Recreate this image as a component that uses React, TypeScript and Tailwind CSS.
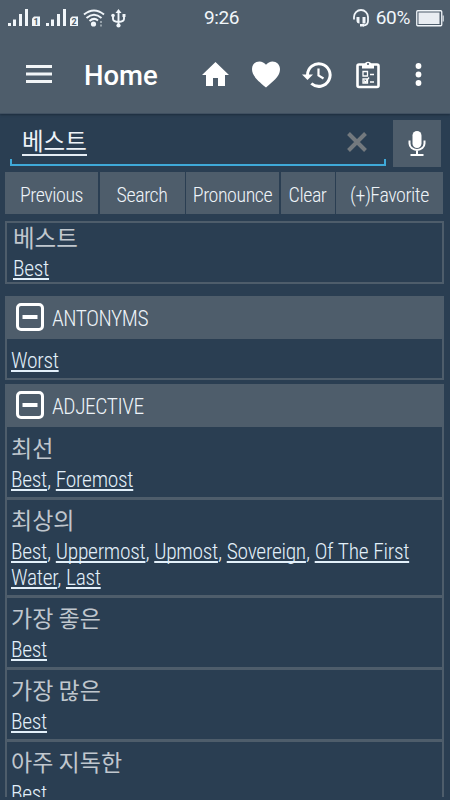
import type { ReactNode } from "react";

interface Meaning {
    word: string;
    results: string[];
}

const actions = [
    { label: "Previous", width: "w-[93px]" },
    { label: "Search", width: "w-[85px]" },
    { label: "Pronounce", width: "w-[93px]" },
    { label: "Clear", width: "w-[54px]" },
    { label: "(+)Favorite", width: "w-[107px]" },
];

const adjectives: Meaning[] = [
    { word: "최선", results: ["Best", "Foremost"] },
    { word: "최상의", results: ["Best", "Uppermost", "Upmost", "Sovereign", "Of The First Water", "Last"] },
    { word: "가장 좋은", results: ["Best"] },
    { word: "가장 많은", results: ["Best"] },
    { word: "아주 지독한", results: ["Best"] },
];

const Signal = ({ sim }: { sim: string }) => (
    <svg className="h-[18px] w-[33px]" viewBox="0 0 33 18" fill="#f1f6fa">
        <path d="M0 14h3v3H0zM5 10.500h3V17H5zM11 5h3v12h-3zM17 0h3v17h-3z" />
        <path d="M24 9.500l2-2h6V17h-8z" />
        <text x="28" y="15.500" fontSize="9" fontWeight="700" textAnchor="middle" fill="#4e5d6b" fontFamily="Roboto">{sim}</text>
    </svg>
);

const StatusBar = () => (
    <div className="flex h-9 items-center pl-2 pr-[6px] text-[#f1f6fa]">
        <div className="flex w-[196px] items-center">
            <Signal sim="1" />
            <div className="w-[5px]" />
            <Signal sim="2" />
            <svg className="ml-1 h-[18px] w-[22px]" viewBox="0 0 22 18" fill="none" stroke="#f1f6fa" strokeWidth="2">
                <path d="M1 5.500Q11-2.500 21 5.500M3.500 9Q11 2.500 18.500 9M6.500 12Q11 8 15 11.500" />
                <circle cx="10.500" cy="15" r="2.600" fill="#f1f6fa" stroke="none" />
                <path d="M18 12v2M18 15.500v2" strokeWidth="1.500" opacity=".6" />
            </svg>
            <svg className="ml-[6px] h-[19px] w-[15px]" viewBox="0 0 15 19" fill="none" stroke="#f1f6fa" strokeWidth="1.900">
                <path d="M7.500 2v15M2 6v4q0 2.500 5.500 3M13 6v4q0 2.500-5.500 3" />
                <path d="M7.500 0l3 4h-6zM11.500 5h3v3h-3z" fill="#f1f6fa" stroke="none" />
                <circle cx="2" cy="6.500" r="1.800" fill="#f1f6fa" stroke="none" />
                <circle cx="7.500" cy="16.500" r="2.100" fill="#f1f6fa" stroke="none" />
            </svg>
        </div>
        <span className="text-[19px] tracking-[-0.4px]">9:26</span>
        <div className="ml-auto flex items-center">
            <svg className="mr-px h-[18px] w-[16px]" viewBox="0 0 16 18" fill="none" stroke="#f1f6fa" strokeWidth="1.800">
                <path d="M1 10.500V8a7 7 0 0 1 14 0v4q0 4.500-5 4.500" />
                <path d="M3.500 8h3v6.500q-3 0-3-3zM9.500 8h3v6.500h-3zM7 15h4v2.500H7z" fill="#f1f6fa" stroke="none" />
            </svg>
            <span className="ml-[6px] text-[19px] tracking-[-0.3px]">60%</span>
            <svg className="ml-[6px] h-[17px] w-[28px]" viewBox="0 0 28 17" fill="none">
                <rect x=".75" y=".75" width="25" height="15" rx="1" stroke="#f1f6fa" strokeWidth="1.300" />
                <path d="M2.500 2.500h21v11.500h-21z" fill="#e9edf2" />
                <path d="M27.200 5.500v6" stroke="#f1f6fa" />
            </svg>
        </div>
    </div>
);

const AppBar = () => (
    <div className="flex h-[77px] items-center pl-[26px]">
        <svg className="h-5 w-[26px]" viewBox="0 0 26 20">
            <path d="M0 0h26v3H0zM0 7.500h26v3H0zM0 15h26v3H0z" fill="#f2f5f7" />
        </svg>
        <h1 className="ml-8 w-[86px] pt-[2px] text-[27.500px] font-medium text-white">Home</h1>
        <svg className="ml-[31px] h-[26px] w-[29px]" viewBox="0 0 29 26" fill="#fff">
            <path d="M14.500 0L28 13h-4v11h-7v-8h-5v8H5V13H1z" />
        </svg>
        <svg className="ml-[21px] h-[27px] w-[30px]" viewBox="0 0 30 27" fill="#fff">
            <path d="M15 26.500C4 17.500 1 13.500 1 8C1 3.500 4.500 .5 8.500 .5C11 .5 13.500 1.800 15 3.800C16.500 1.800 19 .5 21.500 .5C25.500 .5 29 3.500 29 8C29 13.500 26 17.500 15 26.500z" />
        </svg>
        <svg className="ml-[21px] h-[28px] w-[30px]" viewBox="0 0 30 28" fill="none" stroke="#fff" strokeWidth="3">
            <path d="M5.500 14a11.300 11.300 0 1 1 3.800 8.500" />
            <path d="M0 13.500h11l-5.500 5.500z" fill="#fff" stroke="none" />
            <path d="M16.500 7.500v7l5 3" strokeWidth="2.200" />
        </svg>
        <svg className="ml-[24px] h-[29px] w-[24px]" viewBox="0 0 24 29" fill="none" stroke="#fff">
            <rect x="1.500" y="4.500" width="21" height="22.500" rx="1.500" strokeWidth="2.600" />
            <path d="M6 8.500V4.500h2.500a3.600 3.600 0 0 1 7 0H18v4z" fill="#fff" stroke="none" />
            <circle cx="12" cy="4" r="1.100" fill="#4e5d6b" stroke="none" />
            <path d="M7 11.500h4.500V16H7zM7 19h4.500v4H7zM14 14.500h4M14 22h4M8 20.500l1.500 1.700L13 17.500" strokeWidth="1.300" />
        </svg>
        <svg className="ml-[35px] h-6 w-[7px]" viewBox="0 0 7 24" fill="#fff">
            <circle cx="3.500" cy="3" r="2.900" />
            <circle cx="3.500" cy="11.500" r="2.900" />
            <circle cx="3.500" cy="20" r="2.900" />
        </svg>
    </div>
);

const SearchRow = () => (
    <div className="flex pl-[10px] pt-[6px]">
        <div className="flex h-[46px] w-[376px] flex-col">
            <div className="flex h-[39px] items-end justify-between pl-3 pr-[19px]">
                <span className="mb-[3px] h-[25px] border-b-2 border-[#e4ecf4] text-[23.500px] font-normal leading-[23px] text-[#eef3f8]">베스트</span>
                <svg className="mb-[7px] h-[20px] w-[20px]" viewBox="0 0 20 20" stroke="#73797e" strokeWidth="4">
                    <path d="M1.500 1.500l17 17M18.500 1.500l-17 17" />
                </svg>
            </div>
            <div className="h-[7px] border-x-2 border-b-2 border-[#3fa9d8]" />
        </div>
        <button className="ml-[7px] flex h-[47px] w-12 items-center justify-center bg-[#4e5d6b]">
            <svg className="h-[26px] w-[18px]" viewBox="0 0 18 26" fill="none" stroke="#fff" strokeWidth="2">
                <rect x="4.500" y="0" width="9" height="17" rx="4.500" fill="#fff" stroke="none" />
                <path d="M1.500 9.500v3a7.500 6.500 0 0 0 15 0v-3M9 19v5M2.500 24h13" />
            </svg>
        </button>
    </div>
);

const SectionHeader = ({ children }: { children: ReactNode }) => (
    <div className="flex h-[43px] items-center bg-[#4e5d6b] pl-[11px] text-[21.500px] tracking-[-0.45px] text-[#edf3f8]">
        <svg className="mb-[2px] mr-2 h-7 w-7" viewBox="0 0 28 28" fill="none" stroke="#fff">
            <rect x="1.500" y="1.500" width="25" height="25" rx="3.500" strokeWidth="3" />
            <path d="M6.500 14h15" strokeWidth="4" />
        </svg>
        <span className="pt-[3px]">{children}</span>
    </div>
);

const Links = ({ items }: { items: string[] }) => (
    <p className="text-[21.500px] leading-[26px] tracking-[-0.3px] text-[#e3f0fa] [word-spacing:0.4px]">
        {items.map((item, i) => (
            <span key={item}>
                <a className="underline decoration-[1.500px] underline-offset-[2px] [text-decoration-skip-ink:none]">{item}</a>
                {i < items.length - 1 && ", "}
            </span>
        ))}
    </p>
);

export default function App() {
    return (
        <div className="h-[800px] w-[450px] overflow-hidden bg-[#2a3e52] font-['Roboto_Condensed',Roboto,'Noto_Sans_CJK_KR',sans-serif] font-light [font-stretch:75%]">
            <header className="h-[114px] border-b border-[#405061] bg-[#4e5d6b] font-['Roboto',sans-serif] font-normal shadow-[0_1px_2px_#1d2c3c] [font-stretch:100%]">
                <StatusBar />
                <AppBar />
            </header>
            <SearchRow />
            <div className="mt-[5px] flex h-[42px] gap-[1.500px] pl-[5px]">
                {actions.map((a) => (
                    <button key={a.label} className={`${a.width} shrink-0 whitespace-nowrap bg-[#4e5d6b] pt-[3px] text-[20px] tracking-[-0.45px] text-[#eef4f9]`}>
                        {a.label}
                    </button>
                ))}
            </div>

            <main className="mx-[5px] mt-[7px] h-[576px] w-[439px] overflow-hidden">
                <div className="h-[63px] border-2 border-[#4e5d6b] pl-[6px] pt-[2px]">
                    <p className="h-[31px] text-[23.500px] font-normal leading-[29px] text-[#c0c7ce]">베스트</p>
                    <Links items={["Best"]} />
                </div>
                <section className="mt-3 border-b-2 border-[#4e5d6b]">
                    <SectionHeader>ANTONYMS</SectionHeader>
                    <div className="h-[39px] border-x-2 border-[#4e5d6b] pl-1 pt-[9px]">
                        <Links items={["Worst"]} />
                    </div>
                </section>
                <section className="mt-1">
                    <SectionHeader>ADJECTIVE</SectionHeader>
                    <div className="border-x-2 border-[#4e5d6b] pt-px">
                        {adjectives.map((m) => (
                            <div key={m.word} className="border-b-[3px] border-[#4e5d6b] pb-[4px] pl-1 pt-[6px]">
                                <p className="h-[33px] text-[23px] font-normal leading-[31px] text-[#c0c7ce]">{m.word}</p>
                                <Links items={m.results} />
                            </div>
                        ))}
                    </div>
                </section>
            </main>
        </div>
    );
}
